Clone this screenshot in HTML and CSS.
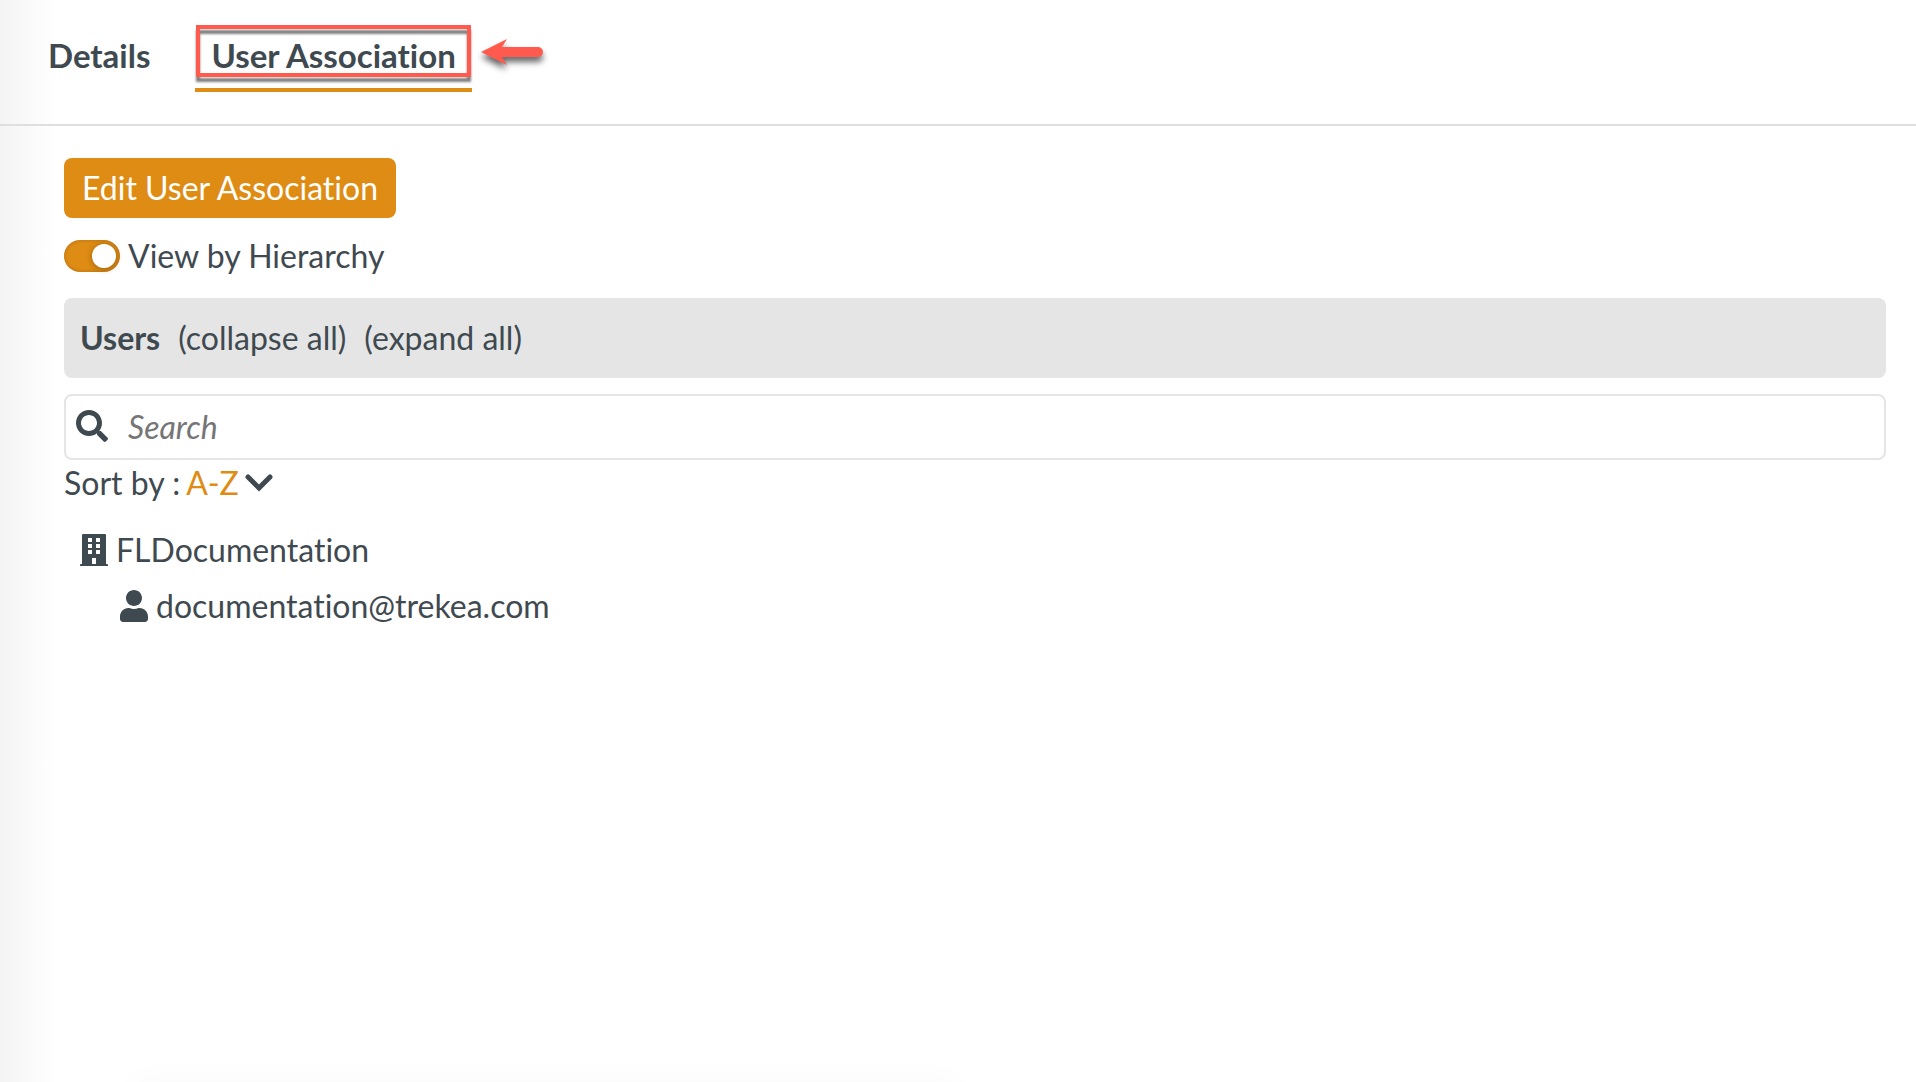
FILE: index.html
```html
<!DOCTYPE html>
<html lang="en">
<head>
    <meta charset="UTF-8">
    <meta name="viewport" content="width=device-width, initial-scale=1.0">
    <title>User Association</title>
    <link rel="stylesheet" href="styles.css">
</head>
<body>

<!-- Tabs -->
<nav class="tabs">
    <a href="#details" class="tab">Details</a>
    <a href="#users" class="tab active">User Association
        <svg class="arrow" viewBox="0 0 62 28" aria-hidden="true">
            <path d="M0 14 L26 1 L21 9 H57 A5 5 0 0 1 57 19 H21 L26 27 Z"/>
        </svg>
    </a>
</nav>

<main class="content" id="users">
    <button class="edit-button">Edit User Association</button>

    <div class="toggle-row">
        <input type="checkbox" id="hierarchy" class="toggle" checked>
        <label for="hierarchy">View by Hierarchy</label>
    </div>

    <div class="users-bar">
        <strong>Users</strong>
        <button class="text-button">(collapse all)</button>
        <button class="text-button">(expand all)</button>
    </div>

    <div class="search-box">
        <label for="search" aria-label="Search">
            <svg class="icon-search" viewBox="0 0 512 512" aria-hidden="true">
                <path d="M505 442.700L405.300 343c-4.500-4.500-10.600-7-17-7H372c27.600-35.300 44-79.700 44-128C416 93.100 322.900 0 208 0S0 93.100 0 208s93.100 208 208 208c48.300 0 92.700-16.400 128-44v16.300c0 6.400 2.500 12.500 7 17l99.700 99.700c9.400 9.400 24.600 9.400 33.900 0l28.300-28.300c9.400-9.400 9.400-24.600.1-34zM208 336c-70.700 0-128-57.200-128-128 0-70.700 57.200-128 128-128 70.700 0 128 57.200 128 128 0 70.700-57.200 128-128 128z"/>
            </svg>
        </label>
        <input type="search" id="search" class="search-input" placeholder="Search">
    </div>

    <div class="sort-row">
        <label for="sort">Sort by :</label>
        <select id="sort" class="sort-select">
            <option>A-Z</option>
        </select>
        <svg class="icon-chevron" viewBox="0 0 28 18" aria-hidden="true">
            <path d="M3 3 L14 14 L25 3"/>
        </svg>
    </div>

    <!-- Organization tree -->
    <ul class="tree">
        <li>
            <div class="tree-row">
                <svg class="icon-tree" viewBox="0 0 28 32" aria-hidden="true">
                    <path fill-rule="evenodd" d="M3 0H25Q26 0 26 1V30H27Q28 30 28 31V32H0V31Q0 30 1 30H2V1Q2 0 3 0ZM8 4V8H12V4ZM16 4V8H20V4ZM8 10V14H12V10ZM16 10V14H20V10ZM8 16V20H12V16ZM16 16V20H20V16ZM12 24V30H16V24Z"/>
                </svg>
                <span>FLDocumentation</span>
            </div>
            <ul class="tree-children">
                <li class="tree-row">
                    <svg class="icon-tree" viewBox="0 0 448 512" aria-hidden="true">
                        <path d="M224 256c70.700 0 128-57.300 128-128S294.700 0 224 0 96 57.300 96 128s57.300 128 128 128zm89.600 32h-16.700c-22.200 10.200-46.900 16-72.900 16s-50.600-5.800-72.900-16h-16.700C60.200 288 0 348.200 0 422.400V464c0 26.500 21.500 48 48 48h352c26.500 0 48-21.500 48-48v-41.600c0-74.200-60.200-134.400-134.400-134.400z"/>
                    </svg>
                    <span>documentation@trekea.com</span>
                </li>
            </ul>
        </li>
    </ul>
</main>

</body>
</html>
```
FILE: styles.css
```css
* {
    box-sizing: border-box;
}
body {
    margin: 0;
    min-height: 100vh;
    font-family: Lato, "Open Sans", sans-serif;
    font-size: 32px;
    font-variant-ligatures: none;
    color: #3f4950;
    background: linear-gradient(to right, #f4f4f4, #fff 56px);
}
/* soft shadow along the bottom edge */
body::after {
    content: "";
    position: fixed;
    left: 7%;
    right: 50%;
    bottom: -24px;
    height: 20px;
    box-shadow: 0 0 36px rgba(0, 0, 0, 0.04);
}
button, input, select {
    font: inherit;
    font-variant-ligatures: none;
    color: inherit;
}
svg {
    display: block;
    fill: currentColor;
}
.tabs {
    display: flex;
    gap: 45px;
    padding: 22px 48px 32px;
    border-bottom: 2px solid #dfdfdf;
    font-size: 33px;
}
.tab {
    position: relative;
    line-height: 66px;
    border-bottom: 4px solid transparent;
    font-weight: bold;
    color: inherit;
    text-decoration: none;
}
.tab.active {
    padding: 0 16px;
    border-color: #de8c14;
}
.tab.active::before {
    content: "";
    position: absolute;
    top: 3px;
    left: 1px;
    right: 1px;
    height: 44px;
    border: 4px solid #ff5a4d;
    filter: drop-shadow(0 5px 1px rgba(0, 0, 0, 0.5));
}
.arrow {
    position: absolute;
    top: 16px;
    left: calc(100% + 9px);
    width: 62px;
    height: 28px;
    overflow: visible;
    fill: #ff5a4d;
    filter: drop-shadow(0 5px 3px rgba(0, 0, 0, 0.6));
}
.content {
    padding: 32px 30px 32px 64px;
}
.edit-button {
    display: block;
    height: 60px;
    padding: 0 18px 2px;
    border: none;
    border-radius: 8px;
    background-color: #de8c14;
    color: #fff;
    cursor: pointer;
}
.toggle-row {
    display: flex;
    align-items: center;
    gap: 8px;
    margin: 14px 0 18px;
    line-height: 48px;
}
.toggle {
    appearance: none;
    width: 56px;
    height: 32px;
    margin: 0;
    padding: 4px;
    border-radius: 16px;
    background-color: #de8c14;
    box-shadow: inset 0 0 4px rgba(0, 0, 0, 0.2);
    cursor: pointer;
}
.toggle::before {
    content: "";
    display: block;
    width: 24px;
    height: 24px;
    border-radius: 50%;
    background-color: #fff;
    box-shadow: 0 1px 6px rgba(0, 0, 0, 0.3);
}
.toggle:checked::before {
    margin-left: auto;
}
.users-bar {
    display: flex;
    align-items: center;
    gap: 18px;
    height: 80px;
    padding: 0 16px 2px;
    border-radius: 8px;
    background-color: #e5e5e5;
}
.text-button {
    padding: 0;
    border: none;
    background: none;
    cursor: pointer;
}
.search-box {
    display: flex;
    align-items: center;
    gap: 20px;
    height: 66px;
    margin-top: 16px;
    padding: 0 10px 2px;
    border: 2px solid #e5e5e5;
    border-radius: 8px;
    background-color: #fff;
}
.icon-search {
    width: 32px;
    height: 32px;
}
.search-input {
    flex: 1;
    padding: 0;
    border: none;
    outline: none;
    background: none;
}
.search-input::placeholder {
    font-style: italic;
    color: #757575;
}
.sort-row {
    display: flex;
    align-items: center;
    gap: 6px;
    line-height: 46px;
}
.sort-select {
    appearance: none;
    padding: 0;
    border: none;
    background: none;
    color: #de8c14;
    cursor: pointer;
}
.icon-chevron {
    width: 28px;
    height: 18px;
    fill: none;
    stroke: currentColor;
    stroke-width: 5;
    stroke-linecap: round;
}
.tree, .tree-children {
    margin: 0;
    padding: 0;
    list-style: none;
}
.tree {
    margin-top: 16px;
    padding-left: 16px;
}
.tree-children {
    padding-left: 40px;
}
.tree-row {
    display: flex;
    align-items: center;
    gap: 8px;
    line-height: 56px;
}
.icon-tree {
    width: 28px;
    height: 32px;
}
```
